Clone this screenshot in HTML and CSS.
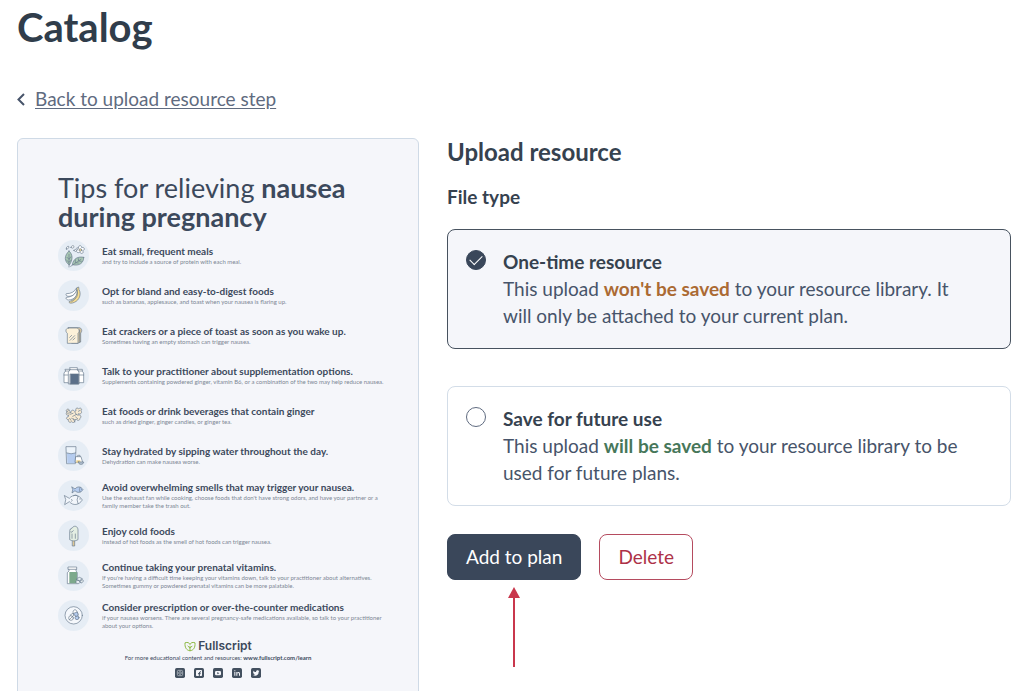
FILE: index.html
```html
<!DOCTYPE html>
<html lang="en">
<head>
<meta charset="utf-8">
<meta name="viewport" content="width=device-width, initial-scale=1">
<title>Catalog</title>
<link rel="stylesheet" href="styles.css">
</head>
<body>
<main class="page">
  <h1 class="page-title">Catalog</h1>
  <nav class="back">
    <svg class="back-icon" viewBox="0 0 8 13" aria-hidden="true"><path d="M7 1 1.500 6.500l5.500 5.500"/></svg>
    <a class="back-link" href="#">Back to upload resource step</a>
  </nav>

  <div class="columns">
    <article class="sheet">
      <h2 class="sheet-title">Tips for relieving <b>nausea during pregnancy</b></h2>
      <ul class="tips">
        <li class="tip">
          <svg class="tip-icon" viewBox="0 0 93 93" aria-hidden="true">
            <g fill="#a9c8b4"><path d="M33 33c11 10 13 24 1 42-15-10-17-27-1-42z"/><path d="M77 52c1 17-14 27-34 22 3-18 17-26 34-22z"/></g>
            <path d="M33 43v38M27 52l6 6 5-7M26 61l7 6 6-6M38 79l31-21M52 60v8l9 1M61 56l1 7 8 1"/>
            <path fill="#fff" d="M61 24c-1-9 10-10 10-1 9-3 11 7 3 9 5 8-5 12-9 4-7 6-13-3-6-8-5-3-4-6 2-4z"/><circle cx="67" cy="30" r="4" fill="#f5dc96"/>
            <path fill="#fff" d="M25 27c-1-5 3-9 7-8 2 4-2 9-7 8zM39 22c1-5 6-7 9-3 0 5-5 8-9 3zM48 31c2-4 7-4 8 0-2 4-6 5-8 0z"/>
          </svg>
          <div class="tip-text"><h3>Eat small, frequent meals</h3><p>and try to include a source of protein with each meal.</p></div>
        </li>
        <li class="tip">
          <svg class="tip-icon" viewBox="0 0 93 93" aria-hidden="true">
            <path fill="#fff" d="M54 26c-5 10-15 15-29 15-3 4 1 7 5 8 16 0 24-8 28-20z"/>
            <path fill="#fff" d="M56 29c-3 14-14 22-31 23-3 4 1 7 6 8 17-1 28-11 31-27z"/>
            <path fill="#f8dd91" d="M57 23l5-2 1 8c8 13 1 32-14 38-8 4-17 3-16-2 18-6 25-18 24-36z"/>
            <path d="M57 30c5 13 0 26-16 35"/>
          </svg>
          <div class="tip-text"><h3>Opt for bland and easy-to-digest foods</h3><p>such as bananas, applesauce, and toast when your nausea is flaring up.</p></div>
        </li>
        <li class="tip">
          <svg class="tip-icon" viewBox="0 0 93 93" aria-hidden="true">
            <path fill="#dcc9a3" d="M33 23h30c8 0 11 10 5 16v27l-9 4H42z"/>
            <path fill="#fcf1d9" d="M31 24h24c9 0 11 11 5 16v30H28V40c-7-5-5-16 3-16z"/>
            <path d="M35 52l6-6M36 61l14-14M45 60l6-6M65 30v36"/>
          </svg>
          <div class="tip-text"><h3>Eat crackers or a piece of toast as soon as you wake up.</h3><p>Sometimes having an empty stomach can trigger nausea.</p></div>
        </li>
        <li class="tip">
          <svg class="tip-icon" viewBox="0 0 93 93" aria-hidden="true">
            <path fill="#fff" d="M22 28h13v6l4 5v29H18V39l4-5zM60 28h13v6l4 5v29H55V39l5-5z"/>
            <path d="M22 33h13M60 33h13M18 45h20M57 45h20"/>
            <path fill="#fff" d="M36 23h22v7l5 6v36H31V36l5-6z"/><path d="M36 29h22"/>
            <path fill="#5b7089" d="M37 42h25v30H37z"/>
          </svg>
          <div class="tip-text"><h3>Talk to your practitioner about supplementation options.</h3><p>Supplements containing powdered ginger, vitamin B6, or a combination of the two may help reduce nausea.</p></div>
        </li>
        <li class="tip">
          <svg class="tip-icon" viewBox="0 0 93 93" aria-hidden="true">
            <path fill="#f8ead2" d="M25 31c2-7 10-4 10 3l4 4c-1-8 7-10 10-4l5-1c-3-9 5-12 8-6 5-6 12 0 7 5 5 7-2 12-8 9l-2 5c8-4 13 4 7 9 0 7-8 8-10 3l-5 1c2 8-6 11-10 6-6 5-12-1-9-6-9 0-8-8-1-9l1-5c-6 2-10-3-6-8z"/>
            <path d="M31 31l-3 5M36 43l9-3M44 49l12-6M41 55l8 4M53 51l6 5M61 34l5-3M39 61l-4-6M51 37l4 7M29 40l8-2M50 66l-3-9"/>
          </svg>
          <div class="tip-text"><h3>Eat foods or drink beverages that contain ginger</h3><p>such as dried ginger, ginger candies, or ginger tea.</p></div>
        </li>
        <li class="tip">
          <svg class="tip-icon" viewBox="0 0 93 93" aria-hidden="true">
            <path fill="#edf4fb" d="M25 20h29l-2 51H27z"/><path fill="#b5ccef" stroke="none" d="M27 39q12 5 25 0l-1 31H28z"/><path d="M26 39q13 5 27 0"/>
            <path fill="#fff" d="M54 50h15l5 17H52zM59 49v-3h7v3"/><path fill="#eed38e" stroke="none" d="M55 61h12v7H55z"/>
            <path fill="#b7c5d4" d="M61 66h16c0 4-3 7-8 7s-8-3-8-7z"/>
          </svg>
          <div class="tip-text"><h3>Stay hydrated by sipping water throughout the day.</h3><p>Dehydration can make nausea worse.</p></div>
        </li>
        <li class="tip">
          <svg class="tip-icon" viewBox="0 0 93 93" aria-hidden="true">
            <path fill="#b5ccef" d="M42 21l9 6c7-9 18-8 24 2-6 9-17 11-24 3l-9 7 2-9z"/><path d="M66 22q-4 7 0 14M70 28h1"/>
            <path fill="#f2f6fb" d="M20 47l14 8c11-13 29-12 39 5-10 16-28 18-39 5l-14 9 3-14z"/><path d="M60 49q-6 10 0 22M65 57h2M41 58q4 3 0 6M47 47l7-2 4 3"/>
          </svg>
          <div class="tip-text"><h3>Avoid overwhelming smells that may trigger your nausea.</h3><p>Use the exhaust fan while cooking, choose foods that don't have strong odors, and have your partner or a<br>family member take the trash out.</p></div>
        </li>
        <li class="tip">
          <svg class="tip-icon" viewBox="0 0 93 93" aria-hidden="true">
            <path fill="#dfc894" d="M44 57h6v21h-6z"/>
            <path fill="#e4efe3" d="M38 27c3-5 7-3 8-7 8-4 14 2 14 10v29c-8 5-17 5-25 0V34c0-3 1-5 3-7z"/>
            <path d="M38 36q4 4 8-4M42 42v13M52 42v13"/>
          </svg>
          <div class="tip-text"><h3>Enjoy cold foods</h3><p>instead of hot foods as the smell of hot foods can trigger nausea.</p></div>
        </li>
        <li class="tip">
          <svg class="tip-icon" viewBox="0 0 93 93" aria-hidden="true">
            <path fill="#fff" d="M31 21h25v7h-2v5l4 5v33H28V38l5-5v-5h-2z"/><path d="M33 28h21"/>
            <path fill="#7da98c" stroke="none" d="M34 36h23v34H34z"/>
            <path fill="#e6edf0" d="M55 57l9-5 9 4-8 6zM54 64c2-5 12-4 12 2s-11 7-12 2zM66 63l8-4c4 3 1 9-4 10z"/>
          </svg>
          <div class="tip-text"><h3>Continue taking your prenatal vitamins.</h3><p>If you're having a difficult time keeping your vitamins down, talk to your practitioner about alternatives.<br>Sometimes gummy or powdered prenatal vitamins can be more palatable.</p></div>
        </li>
        <li class="tip">
          <svg class="tip-icon" viewBox="0 0 93 93" aria-hidden="true">
            <circle cx="47" cy="46" r="26" fill="#f5f8fc"/>
            <circle cx="39" cy="54" r="7" fill="#fff"/><path d="M34 59l10-10"/>
            <circle cx="57" cy="53" r="6" fill="#b5ccef"/>
            <path fill="#fff" d="M45 36c0-8 9-9 11-3l4 9c2 7-7 10-10 4zM38 44l7-4 3 5-5 4z"/><path fill="#b5ccef" d="M47 40l11-4 2 7c1 6-7 8-10 3z"/>
          </svg>
          <div class="tip-text"><h3>Consider prescription or over-the-counter medications</h3><p>if your nausea worsens. There are several pregnancy-safe medications available, so talk to your practitioner<br>about your options.</p></div>
        </li>
      </ul>
      <footer class="sheet-footer">
        <div class="brand">
          <svg class="brand-icon" viewBox="0 0 36 32" aria-hidden="true"><path d="M18 29C7 27 2 19 3 5c8-3 13 0 15 5 2-5 7-8 15-5 1 14-4 22-15 24zM18 29V14M18 21l-7-7M18 21l7-7"/></svg>
          <span>Fullscript</span>
        </div>
        <p class="more">For more educational content and resources: <b>www.fullscript.com/learn</b></p>
        <div class="social">
          <svg viewBox="0 0 30 30" role="img" aria-label="Instagram"><rect class="tile" width="30" height="30" rx="5"/><g class="line"><rect x="7" y="7" width="16" height="16" rx="4"/><circle cx="15" cy="15" r="4"/><path d="M19.500 10.500h.5"/></g></svg>
          <svg viewBox="0 0 30 30" role="img" aria-label="Facebook"><rect class="tile" width="30" height="30" rx="5"/><rect class="fill" x="6" y="6" width="18" height="18" rx="2"/><path class="cut" d="M16 24v-9q0-4 5-4M12 17h8"/></svg>
          <svg viewBox="0 0 30 30" role="img" aria-label="YouTube"><rect class="tile" width="30" height="30" rx="5"/><rect class="fill" x="6" y="9" width="18" height="13" rx="4"/><path class="tile" d="M13 12l6 3.500-6 3.500z"/></svg>
          <svg viewBox="0 0 30 30" role="img" aria-label="LinkedIn"><rect class="tile" width="30" height="30" rx="5"/><path class="fill" d="M7 12h3v11H7zM7 7h3v3H7zM13 12h3v2c2-3 8-3 8 3v6h-3v-6c0-3-5-3-5 0v6h-3z"/></svg>
          <svg viewBox="0 0 30 30" role="img" aria-label="Twitter"><rect class="tile" width="30" height="30" rx="5"/><path class="fill" d="M7 8c2 3 5 4 8 4 0-5 5-6 7-4l3-1-2 3 2 0-2 2c0 11-11 13-17 9 2 0 4 0 5-2-2 0-3-1-4-3h2c-2-1-3-3-3-4l2 0c-2-1-2-3-1-4z"/></svg>
        </div>
      </footer>
    </article>

    <form class="upload">
      <h2 class="upload-title">Upload resource</h2>
      <fieldset class="types">
        <legend class="types-title">File type</legend>
        <div class="options">
          <label class="option">
            <input class="option-radio" type="radio" name="file-type" checked>
            <span class="option-text"><strong class="option-name">One-time resource</strong>This upload <b class="warn">won't be saved</b> to your resource library. It will only be attached to your current plan.</span>
          </label>
          <label class="option">
            <input class="option-radio" type="radio" name="file-type">
            <span class="option-text"><strong class="option-name">Save for future use</strong>This upload <b class="good">will be saved</b> to your resource library to be used for future plans.</span>
          </label>
        </div>
      </fieldset>
      <div class="actions">
        <div class="action-main">
          <button class="btn btn-primary" type="button">Add to plan</button>
          <svg class="arrow" viewBox="0 0 12 80" aria-hidden="true"><path d="M6 0l6 11H0z"/><path d="M5 10h2v70H5z"/></svg>
        </div>
        <button class="btn btn-danger" type="button">Delete</button>
      </div>
    </form>
  </div>
</main>
</body>
</html>
```
FILE: styles.css
```css
* { box-sizing: border-box; }

body {
  margin: 0;
  background: #fff;
  color: #47546a;
  font-family: Lato, "Open Sans", sans-serif;
}

h1, h2, h3, p, ul { margin: 0; padding: 0; }

.page { padding: 3px 13px 0 17px; }

.page-title {
  color: #303d4b;
  font-size: 40px;
  line-height: 48px;
  font-weight: 700;
}

.back {
  display: flex;
  align-items: center;
  gap: 10px;
  margin-top: 34px;
}

.back-icon {
  width: 8px;
  height: 13px;
  fill: none;
  stroke: #47546a;
  stroke-width: 2;
}

.back-link {
  color: #5f6b80;
  font-size: 19px;
  line-height: 28px;
  text-underline-offset: 2px;
}

.columns {
  display: grid;
  grid-template-columns: minmax(0, 402fr) minmax(0, 564fr);
  gap: 28px;
  margin-top: 25px;
}

/* Resource preview */
.sheet {
  padding: 34px 40px 24px;
  border: 1px solid #cfdae6;
  border-radius: 6px;
  background: #f5f6fa;
  color: #3c495c;
}

.sheet-title {
  font-size: 27px;
  line-height: 29px;
  font-weight: 400;
}

.tips {
  margin-top: 4px;
  list-style: none;
}

.tip {
  display: flex;
  align-items: center;
  gap: 13px;
  min-height: 40px;
}

.tip-icon {
  flex: none;
  width: 31px;
  height: 31px;
  border-radius: 50%;
  background: #e6edf5;
  fill: none;
  stroke: #66788d;
  stroke-width: 2;
  stroke-linejoin: round;
  stroke-linecap: round;
}

.tip-text { white-space: nowrap; }

.tip-text h3 {
  font-size: 10px;
  line-height: 14px;
  font-weight: 700;
}

.tip-text p {
  color: #7d8795;
  font-size: 6px;
  line-height: 8px;
}

.sheet-footer {
  display: flex;
  flex-direction: column;
  align-items: center;
  margin-top: 3px;
}

.brand {
  display: flex;
  align-items: center;
  gap: 2px;
  font-family: Inter, sans-serif;
  font-size: 12px;
  line-height: 16px;
  font-weight: 600;
}

.brand-icon {
  width: 12px;
  height: 11px;
  fill: none;
  stroke: #8db942;
  stroke-width: 3;
}

.more {
  font-size: 6px;
  line-height: 8px;
}

.social {
  display: flex;
  gap: 9px;
  margin-top: 6px;
}

.social svg {
  width: 10px;
  height: 10px;
}

.tile { fill: #43505f; }
.fill { fill: #f5f6fa; }
.line { fill: none; stroke: #cdd3da; stroke-width: 2; }
.cut { fill: none; stroke: #43505f; stroke-width: 3; }

/* Upload form */
.upload-title {
  color: #36424f;
  font-size: 24px;
  line-height: 28px;
  font-weight: 700;
}

.types {
  min-width: 0;
  margin: 17px 0 0;
  padding: 0;
  border: 0;
}

.types-title {
  padding: 0;
  color: #36424f;
  font-size: 19px;
  line-height: 27px;
  font-weight: 700;
}

.options {
  display: grid;
  gap: 37px;
  margin-top: 19px;
}

.option {
  display: flex;
  gap: 17px;
  padding: 18px 32px 19px 18px;
  border: 1px solid #d3dde8;
  border-radius: 8px;
  font-size: 19px;
  line-height: 27px;
}

.option:has(:checked) {
  border-color: #47525f;
  background: #f5f6fa;
}

.option-radio {
  appearance: none;
  display: grid;
  flex: none;
  place-items: center;
  width: 20px;
  height: 20px;
  margin: 2px 0 0;
  border: 1px solid #5f6b80;
  border-radius: 50%;
}

.option-radio:checked {
  border-color: #3a475a;
  background: #3a475a;
}

.option-radio:checked::after {
  content: "";
  width: 11px;
  height: 6px;
  margin-bottom: 3px;
  border: solid #fff;
  border-width: 0 0 1px 1px;
  transform: rotate(-45deg);
}

.option-name {
  display: block;
  color: #36424f;
}

.warn { color: #ab6a33; }
.good { color: #47775a; }

.actions {
  display: flex;
  align-items: flex-start;
  gap: 18px;
  margin-top: 28px;
}

.action-main {
  display: flex;
  flex-direction: column;
  align-items: center;
}

.btn {
  padding: 8px 18px;
  border: 1px solid #3a475a;
  border-radius: 8px;
  font-family: inherit;
  font-size: 19px;
  line-height: 28px;
}

.btn-primary {
  background: #3a475a;
  color: #fff;
}

.btn-danger {
  border-color: #b54b5f;
  background: #fff;
  color: #ad3148;
}

.arrow {
  width: 12px;
  height: 80px;
  margin-top: 7px;
  fill: #c9374c;
}
```
